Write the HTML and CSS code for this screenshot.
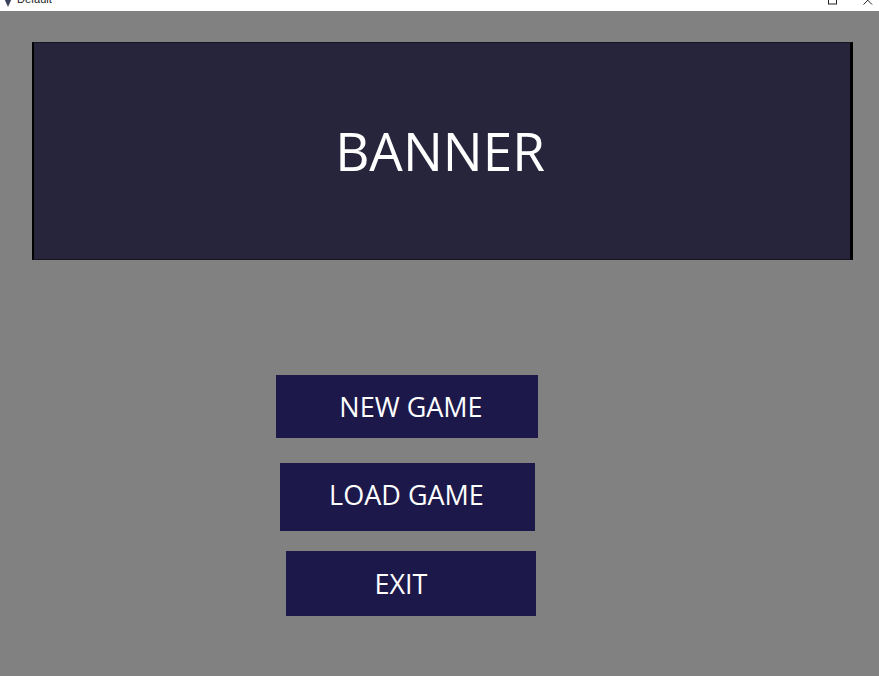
FILE: index.html
```html
<!DOCTYPE html>
<html>
<head>
<meta charset="utf-8">
<title>Default</title>
<link rel="stylesheet" href="styles.css">
</head>
<body>
<div class="titlebar">
  <div class="title-left">
    <svg class="app-icon" width="8" height="10" viewBox="0 0 8 10"><path d="M0 0 L8 0 L4 9 Z" fill="#3a3f5a"/></svg>
    <span class="title-text">Default</span>
  </div>
  <div class="title-right">
    <svg class="max-icon" width="9" height="9" viewBox="0 0 9 9"><rect x="0.5" y="-4" width="8" height="8" fill="none" stroke="#222" stroke-width="1"/></svg>
    <svg class="close-icon" width="10" height="9" viewBox="0 0 10 9"><path d="M0.5 -4 L9 4.5 M9 -4 L0.5 4.5" stroke="#222" stroke-width="1"/></svg>
  </div>
</div>
<main class="screen">
  <div class="banner"><span class="banner-text">BANNER</span></div>
  <div class="menu">
    <div class="btn btn-new"><span>NEW GAME</span></div>
    <div class="btn btn-load"><span>LOAD GAME</span></div>
    <div class="btn btn-exit"><span>EXIT</span></div>
  </div>
</main>
</body>
</html>
```
FILE: styles.css
```css
html, body {
  margin: 0;
  padding: 0;
  background: #818181;
  width: 879px;
  height: 676px;
  overflow: hidden;
  font-family: "Open Sans", "Liberation Sans", sans-serif;
}
.titlebar {
  height: 11px;
  background: #ffffff;
  display: flex;
  justify-content: space-between;
  overflow: hidden;
}
.title-left {
  display: flex;
  align-items: flex-start;
  gap: 5px;
  padding-left: 4px;
}
.app-icon { margin-top: -2px; }
.title-text {
  font-family: "Liberation Sans", sans-serif;
  font-size: 11px;
  line-height: 11px;
  color: #222;
  margin-top: -6px;
}
.title-right {
  display: flex;
  align-items: flex-start;
  gap: 26px;
  padding-right: 6px;
}
.screen {
  display: flex;
  flex-direction: column;
  padding-top: 31px;
}
.banner {
  margin-left: 32px;
  width: 816px;
  height: 216px;
  background: #27253b;
  border-left: 2px solid #000;
  border-right: 3px solid #000;
  border-top: 1px solid #15141f;
  border-bottom: 1px solid #15141f;
  display: flex;
  align-items: center;
  justify-content: center;
}
.banner-text {
  color: #ffffff;
  font-size: 53px;
  line-height: 1;
  margin-left: -4px;
  margin-top: -1px;
  font-weight: 500;
}
.menu {
  display: flex;
  flex-direction: column;
  align-items: flex-start;
  margin-top: 115px;
}
.btn {
  background: #1c184a;
  color: #ffffff;
  display: flex;
  align-items: center;
  justify-content: center;
  font-size: 27px;
  line-height: 1;
  font-weight: 500;
}
.btn span { display: block; }
.btn-new {
  margin-left: 276px;
  width: 262px;
  height: 63px;
}
.btn-new span { margin-left: 8px; margin-top: -1px; }
.btn-load {
  margin-left: 280px;
  margin-top: 25px;
  width: 255px;
  height: 68px;
}
.btn-load span { margin-left: -2px; margin-top: -5px; }
.btn-exit {
  margin-left: 286px;
  margin-top: 20px;
  width: 250px;
  height: 65px;
}
.btn-exit span { margin-left: -20px; margin-top: -1px; }
```
